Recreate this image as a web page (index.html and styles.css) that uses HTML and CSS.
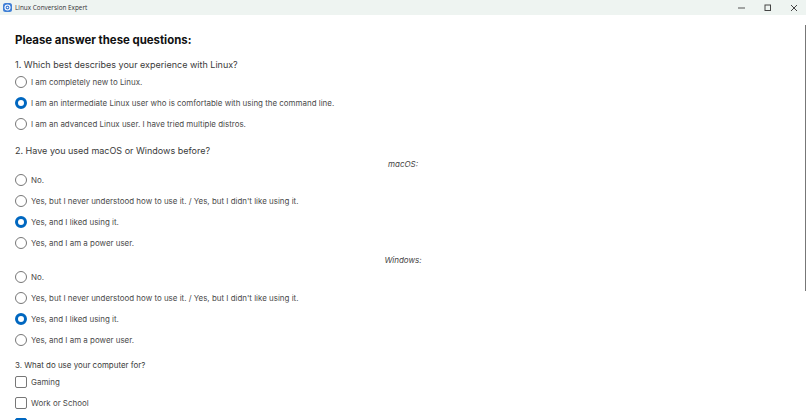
FILE: index.html
```html
<!DOCTYPE html>
<html>
<head>
    <title>Linux Conversion Expert</title>
    <link rel="stylesheet" href="styles.css">
</head>
<body>
    <header class="titlebar">
        <div class="app-title">
            <svg class="app-icon" width="9" height="9" viewBox="0 0 18 18">
                <path d="M5 0h8a5 5 0 0 1 5 5v8a5 5 0 0 1-5 5H5a5 5 0 0 1-5-5V5a5 5 0 0 1 5-5z" fill="#3f7fd6"/>
                <circle cx="9" cy="9" r="5" fill="none" stroke="#fff" stroke-width="2.2"/>
                <circle cx="9" cy="9" r="1.6" fill="#fff"/>
            </svg>
            <span>Linux Conversion Expert</span>
        </div>
        <div class="window-buttons">
            <svg width="8" height="8" viewBox="0 0 8 8"><path d="M0 4h7" stroke="#555" stroke-width="1"/></svg>
            <svg width="8" height="8" viewBox="0 0 8 8"><rect x="1" y="1" width="5.5" height="5.5" fill="none" stroke="#444" stroke-width="1"/></svg>
            <svg width="8" height="8" viewBox="0 0 8 8"><path d="M1 1l6 6M7 1l-6 6" stroke="#444" stroke-width="1"/></svg>
        </div>
    </header>

    <main class="content">
        <h1>Please answer these questions:</h1>

        <h2 class="q1">1. Which best describes your experience with Linux?</h2>
        <div class="options">
            <label class="option"><input type="radio" name="exp"><span>I am completely new to Linux.</span></label>
            <label class="option"><input type="radio" name="exp" checked><span>I am an intermediate Linux user who is comfortable with using the command line.</span></label>
            <label class="option"><input type="radio" name="exp"><span>I am an advanced Linux user. I have tried multiple distros.</span></label>
        </div>

        <h2 class="q2">2. Have you used macOS or Windows before?</h2>
        <p class="os-name">macOS:</p>
        <div class="options">
            <label class="option"><input type="radio" name="mac"><span>No.</span></label>
            <label class="option"><input type="radio" name="mac"><span>Yes, but I never understood how to use it. / Yes, but I didn't like using it.</span></label>
            <label class="option"><input type="radio" name="mac" checked><span>Yes, and I liked using it.</span></label>
            <label class="option"><input type="radio" name="mac"><span>Yes, and I am a power user.</span></label>
        </div>
        <p class="os-name os-windows">Windows:</p>
        <div class="options">
            <label class="option"><input type="radio" name="win"><span>No.</span></label>
            <label class="option"><input type="radio" name="win"><span>Yes, but I never understood how to use it. / Yes, but I didn't like using it.</span></label>
            <label class="option"><input type="radio" name="win" checked><span>Yes, and I liked using it.</span></label>
            <label class="option"><input type="radio" name="win"><span>Yes, and I am a power user.</span></label>
        </div>

        <h2 class="q3">3. What do use your computer for?</h2>
        <div class="options">
            <label class="option"><input type="checkbox"><span>Gaming</span></label>
            <label class="option"><input type="checkbox"><span>Work or School</span></label>
            <label class="option"><input type="checkbox" checked></label>
        </div>
    </main>

    <div class="scroll-thumb"></div>
</body>
</html>
```

FILE: styles.css
```css
html, body {
    margin: 0;
    height: 420px;
    overflow: hidden;
    background: #fff;
}

body {
    font-family: Inter, "Noto Sans", sans-serif;
    color: #2b2b2b;
}

.titlebar {
    height: 15px;
    background: #eef4f1;
    display: flex;
    justify-content: space-between;
    align-items: center;
}

.app-title {
    display: flex;
    align-items: center;
    gap: 3px;
    padding-left: 3px;
    font-family: "Open Sans", sans-serif;
    font-size: 6.4px;
    color: #333;
}

.window-buttons {
    display: flex;
    gap: 18px;
    padding-right: 8px;
}

.content {
    height: 387px;
    overflow: hidden;
    padding: 18px 15px 0;
}

h1 {
    margin: 0;
    font-size: 11.4px;
    line-height: 14px;
    font-weight: 700;
    color: #111;
}

h2 {
    margin: 0;
    font-size: 9px;
    line-height: 12px;
    font-weight: 400;
    color: #3a3a3a;
}

h2.q1 {
    margin-top: 12px;
}

h2.q2 {
    margin-top: 11px;
}

h2.q3 {
    margin-top: 9px;
    font-size: 7.95px;
}

.options {
    display: flex;
    flex-direction: column;
}

.option {
    height: 21px;
    display: flex;
    align-items: center;
    gap: 4px;
    font-size: 7.95px;
    color: #4a4a4a;
}

input {
    appearance: none;
    margin: 0;
    width: 12px;
    height: 12px;
    box-sizing: border-box;
    border: 1px solid #777;
    background: #fff;
    flex: none;
}

input[type="radio"] {
    border-radius: 50%;
}

input[type="radio"]:checked {
    border: 3.5px solid #0067c0;
}

input[type="checkbox"] {
    border-radius: 2px;
}

input[type="checkbox"]:checked {
    background: #0067c0;
    border-color: #0067c0;
}

.os-name {
    margin: 2px 0 0;
    text-align: center;
    font-size: 8px;
    line-height: 10px;
    font-style: italic;
    color: #444;
}

.os-windows {
    margin-bottom: 1px;
}

.scroll-thumb {
    position: absolute;
    top: 25px;
    right: 0;
    width: 1px;
    height: 266px;
    background: #777;
}
```
